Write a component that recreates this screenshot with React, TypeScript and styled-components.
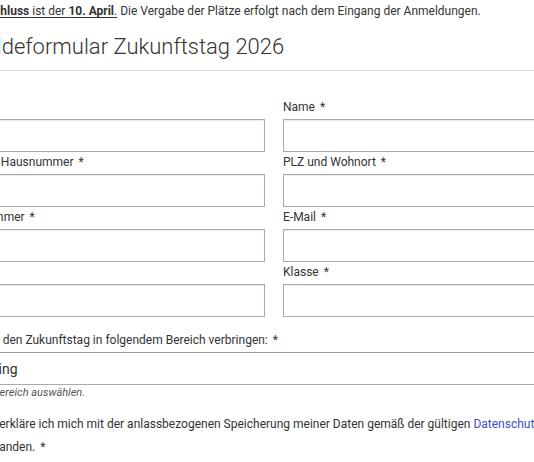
import React from "react";
import styled, {createGlobalStyle} from "styled-components";

const GlobalStyle = createGlobalStyle`
  html, body {
    margin: 0;
    padding: 0;
    background: #fff;
    overflow: hidden;
  }
  body {
    font-family: Roboto, "Liberation Sans", sans-serif;
    color: #333;
  }
`;

const Page = styled.div`
  width: 668px;
  margin-left: -60px;
`;

const Intro = styled.p`
  margin: 1px 0 0;
  font-size: 12px;
  line-height: 20px;
  color: #333;
  u { text-underline-offset: 2px; }
`;

const Title = styled.h2`
  margin: 12px 0 0;
  font-weight: 300;
  font-size: 22px;
  line-height: 28px;
  color: #333;
`;

const Rule = styled.hr`
  margin: 9px 0 0;
  border: 0;
  border-top: 1px solid #ddd;
`;

const Grid = styled.div`
  display: grid;
  grid-template-columns: 1fr 1fr;
  column-gap: 18px;
  row-gap: 1px;
  margin-top: 27px;
`;

const Field = styled.div`
  display: flex;
  flex-direction: column;
`;

const Label = styled.label`
  display: block;
  font-size: 12px;
  line-height: 18px;
  margin-bottom: 3px;
  color: #333;
  white-space: nowrap;
`;

const Star = styled.span`
  margin-left: 5px;
`;

const Input = styled.input`
  box-sizing: border-box;
  height: 33px;
  width: 100%;
  margin: 0;
  border: 1px solid #aaa;
  box-shadow: inset 0 1px 1px rgba(0, 0, 0, 0.08);
  background: #fff;
  font: inherit;
`;

const Block = styled.div`
  margin-top: 14px;
`;

const Select = styled.div`
  box-sizing: border-box;
  height: 33px;
  border: 1px solid #aaa;
  border-top-color: #999;
  padding: 0 14px;
  display: flex;
  align-items: center;
  font-size: 14px;
  color: #333;
`;

const Hint = styled.div`
  font-size: 11px;
  line-height: 16px;
  font-style: italic;
  color: #555;
`;

const Consent = styled.label`
  display: flex;
  gap: 4px;
  margin-top: 12px;
  font-size: 12px;
  line-height: 23px;
  color: #333;
`;

const Check = styled.input`
  margin: 5px 0 0;
  width: 13px;
  height: 13px;
  flex: none;
`;

const Link = styled.a`
  color: #3c4fc7;
  text-decoration: none;
`;

const fields: string[] = [
    "Vorname", "Name",
    "Straße und Hausnummer", "PLZ und Wohnort",
    "Telefonnummer", "E-Mail",
    "Schule", "Klasse",
];

export default function App() {
    return (
        <Page>
            <GlobalStyle/>
            <Intro>
                <u><b>Anmeldeschluss</b> ist der <b>10. April</b>.</u> Die Vergabe der Plätze erfolgt nach dem Eingang der Anmeldungen.
            </Intro>
            <Title>Anmeldeformular Zukunftstag 2026</Title>
            <Rule/>
            <Grid>
                {fields.map((f) => (
                    <Field key={f}>
                        <Label>{f}<Star>*</Star></Label>
                        <Input type="text"/>
                    </Field>
                ))}
            </Grid>
            <Block>
                <Label>Ich möchte den Zukunftstag in folgendem Bereich verbringen:<Star>*</Star></Label>
                <Select>Marketing</Select>
                <Hint>Bitte einen Bereich auswählen.</Hint>
            </Block>
            <Consent>
                <Check type="checkbox"/>
                <span>
                    Hiermit erkläre ich mich mit der anlassbezogenen Speicherung meiner Daten gemäß der gültigen <Link href="#">Datenschutzerklärung</Link> einverstanden.<Star>*</Star>
                </span>
            </Consent>
        </Page>
    );
}
